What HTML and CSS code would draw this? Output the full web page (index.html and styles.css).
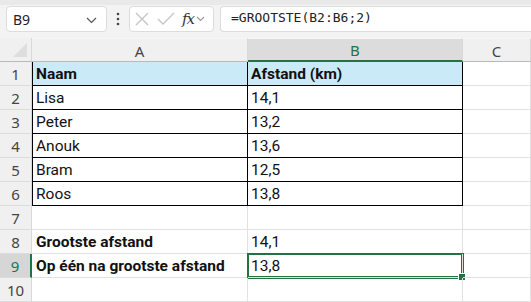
FILE: index.html
```html
<!DOCTYPE html>
<html lang="nl">
  <head>
    <meta charset="UTF-8" />
    <title>Grootste afstand</title>
    <link rel="stylesheet" href="styles.css">
  </head>
  <body>
    <header class="formula-bar">
      <div class="name-box">
        <span>B9</span>
        <svg class="chevron" width="11" height="7" viewBox="0 0 11 7"><path d="M1 1l4.5 4.5L10 1" fill="none" stroke="#555" stroke-width="1.2"/></svg>
      </div>
      <div class="dots">
        <svg width="4" height="14" viewBox="0 0 4 14"><circle cx="2" cy="2" r="1.3" fill="#444"/><circle cx="2" cy="7" r="1.3" fill="#444"/><circle cx="2" cy="12" r="1.3" fill="#444"/></svg>
      </div>
      <div class="fx-box">
        <svg width="14" height="14" viewBox="0 0 14 14"><path d="M1 1l12 12M13 1L1 13" stroke="#c4c4c4" stroke-width="1.3"/></svg>
        <svg width="18" height="14" viewBox="0 0 18 14"><path d="M1 7l5 5L17 1" fill="none" stroke="#c4c4c4" stroke-width="1.3"/></svg>
        <span class="fx">fx</span>
        <svg width="9" height="6" viewBox="0 0 9 6"><path d="M1 1l3.5 3.5L8 1" fill="none" stroke="#999" stroke-width="1.1"/></svg>
      </div>
      <div class="formula">=GROOTSTE(B2:B6;2)</div>
    </header>

    <main class="sheet">
      <div class="corner"></div>
      <div class="col-head">A</div>
      <div class="col-head active">B</div>
      <div class="col-head">C</div>

      <div class="row-head">1</div>
      <div class="cell tbl first th">Naam</div>
      <div class="cell tbl th">Afstand (km)</div>
      <div class="cell"></div>

      <div class="row-head">2</div>
      <div class="cell tbl first">Lisa</div>
      <div class="cell tbl">14,1</div>
      <div class="cell"></div>

      <div class="row-head">3</div>
      <div class="cell tbl first">Peter</div>
      <div class="cell tbl">13,2</div>
      <div class="cell"></div>

      <div class="row-head">4</div>
      <div class="cell tbl first">Anouk</div>
      <div class="cell tbl">13,6</div>
      <div class="cell"></div>

      <div class="row-head">5</div>
      <div class="cell tbl first">Bram</div>
      <div class="cell tbl">12,5</div>
      <div class="cell"></div>

      <div class="row-head">6</div>
      <div class="cell tbl first">Roos</div>
      <div class="cell tbl">13,8</div>
      <div class="cell"></div>

      <div class="row-head">7</div>
      <div class="cell"></div>
      <div class="cell"></div>
      <div class="cell"></div>

      <div class="row-head">8</div>
      <div class="cell bold">Grootste afstand</div>
      <div class="cell">14,1</div>
      <div class="cell"></div>

      <div class="row-head active">9</div>
      <div class="cell bold">Op één na grootste afstand</div>
      <div class="cell selected">13,8</div>
      <div class="cell"></div>

      <div class="row-head">10</div>
      <div class="cell"></div>
      <div class="cell"></div>
      <div class="cell"></div>
    </main>
  </body>
</html>
```

FILE: styles.css
```css
* {
  box-sizing: border-box;
}
body {
  margin: 0;
  width: 531px;
  height: 302px;
  overflow: hidden;
  background: #fff;
  font-family: "Noto Sans", "Liberation Sans", sans-serif;
}

/* formula bar */
.formula-bar {
  height: 38px;
  background: #f3f3f3;
  border-top: 5px solid #e9e9e9;
  display: flex;
  align-items: flex-start;
  padding: 1px 0 0 6px;
}
.name-box {
  width: 101px;
  height: 26px;
  background: #fff;
  border: 1px solid #dcdcdc;
  border-radius: 4px;
  display: flex;
  align-items: center;
  justify-content: space-between;
  padding: 0 9px 0 6px;
  font-size: 14px;
  color: #222;
}
.name-box .chevron {
  margin-top: 2px;
}
.dots {
  width: 22px;
  height: 26px;
  display: flex;
  align-items: center;
  justify-content: center;
}
.fx-box {
  width: 85px;
  height: 26px;
  background: #fff;
  border: 1px solid #dcdcdc;
  border-radius: 4px;
  display: flex;
  align-items: center;
  padding: 0 4px 0 5px;
  gap: 8px;
}
.fx-box .fx {
  font-family: "DejaVu Serif", "Liberation Serif", serif;
  font-style: italic;
  font-size: 15px;
  color: #333;
  margin-left: -1px;
  margin-right: -6px;
  letter-spacing: -1px;
}
.formula {
  flex: 1;
  height: 26px;
  margin-left: 6px;
  background: #fff;
  border: 1px solid #dcdcdc;
  border-right: none;
  border-radius: 4px 0 0 4px;
  padding: 3px 0 0 10px;
  font-family: "DejaVu Sans Mono", "Liberation Mono", monospace;
  font-size: 13px;
  color: #222;
}

/* sheet grid */
.sheet {
  display: grid;
  grid-template-columns: 32px 216px 215px 1fr;
  grid-auto-rows: 24px;
  font-family: Roboto, "Noto Sans", sans-serif;
  font-size: 15.5px;
}
.corner {
  background: #f0f0f0;
  border-right: 1px solid #d8d8d8;
  border-bottom: 1px solid #b9b9b9;
  position: relative;
}
.corner::after {
  content: "";
  position: absolute;
  right: 4px;
  bottom: 4px;
  border-style: solid;
  border-width: 0 0 14px 14px;
  border-color: transparent transparent #dedede transparent;
}
.col-head {
  background: #f0f0f0;
  border-right: 1px solid #d8d8d8;
  border-bottom: 1px solid #b9b9b9;
  border-top: 1px solid #f7f7f7;
  display: flex;
  align-items: center;
  justify-content: center;
  color: #444;
  padding-top: 1px;
  font-family: "Noto Sans", sans-serif;
  font-size: 15px;
}
.col-head.active {
  background: #dcdcdc;
  color: #217346;
  border-bottom: 2px solid #217346;
}
.row-head {
  background: #f0f0f0;
  border-right: 1px solid #d8d8d8;
  border-bottom: 1px solid #dcdcdc;
  display: flex;
  align-items: center;
  justify-content: center;
  color: #444;
  font-family: "Noto Sans", sans-serif;
  font-size: 15px;
}
.row-head.active {
  background: #d6d6d6;
  color: #217346;
  border-right: 2px solid #217346;
}
.cell {
  border-right: 1px solid #e1e1e1;
  border-bottom: 1px solid #e1e1e1;
  padding: 0 3px;
  display: flex;
  align-items: center;
  color: #111;
  white-space: nowrap;
  position: relative;
}
.cell.tbl {
  border-right-color: #000;
  border-bottom-color: #000;
}
.cell.tbl.first {
  box-shadow: inset 1px 0 0 #000;
  padding-left: 4px;
}
.cell.th {
  background: #caeaf8;
  font-weight: 700;
}
.cell.bold {
  font-weight: 700;
  padding-left: 4px;
}
.cell.selected {
  box-shadow: 0 0 0 1px #217346, inset 0 0 0 1px #217346;
}
.cell.selected::after {
  content: "";
  position: absolute;
  right: -4px;
  bottom: -4px;
  width: 6px;
  height: 6px;
  background: #217346;
  border: 1px solid #fff;
}
```
